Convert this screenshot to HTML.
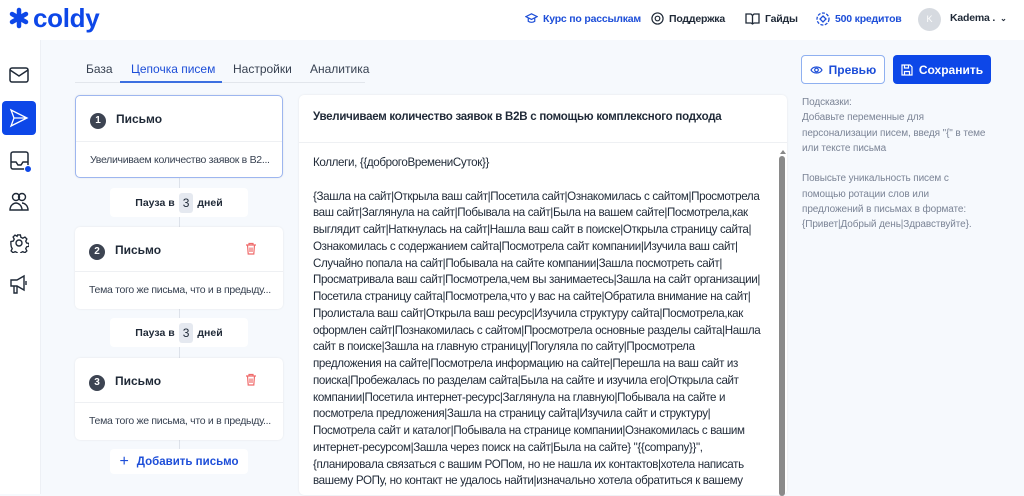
<!DOCTYPE html>
<html><head><meta charset="utf-8"><style>
*{box-sizing:border-box;margin:0;padding:0}
body{width:1024px;height:494px;overflow:hidden;background:#f6f9fd;font-family:"Liberation Sans","Noto Sans CJK SC",sans-serif;color:#1f2937;position:relative}
.abs{position:absolute}
.hdr{left:0;top:0;width:1024px;height:40px;background:#fff}
.side{left:0;top:40px;width:41px;height:454px;background:#fff;border-right:1px solid #edf0f5}
.nav{font-size:10.5px;font-weight:bold;display:flex;align-items:center;gap:5px;top:12px;letter-spacing:-0.2px}
.tab{font-size:12px;top:62px;color:#374151}
.card{background:#fff;border-radius:5px;box-shadow:0 0 2px rgba(0,0,0,.08)}
.num{width:16px;height:16px;border-radius:50%;background:#3d4452;color:#fff;font-size:10px;font-weight:bold;text-align:center;line-height:16px;display:inline-block}
.ct{font-size:12px;font-weight:bold;color:#1f2937}
.cs{font-size:10.5px;color:#374151;letter-spacing:-0.3px}
.pause{background:#fff;border-radius:4px;font-size:10.5px;font-weight:bold;display:flex;align-items:center;justify-content:center;gap:4px;width:138px;height:29px;left:110px}
.pause span{background:#e5e9f0;border-radius:3px;padding:3px 4px;font-size:12px;font-weight:normal}
.vl{width:1px;background:#dde2ea;left:179px}
.body{left:313px;top:155px;font-size:11.6px;line-height:16.75px;color:#1f2937;white-space:pre;letter-spacing:-0.36px}
.hint{left:802px;top:95px;font-size:10px;line-height:15.3px;color:#7b8496;white-space:pre;letter-spacing:-0.1px}
</style></head><body>
<div class="abs hdr"></div>
<div class="abs" style="left:8px;top:4px;display:flex;align-items:center;gap:3px">
<svg width="22" height="22" viewBox="0 0 22 22"><g stroke="#0d47e8" stroke-width="4.5" stroke-linecap="round"><line x1="11" y1="3" x2="11" y2="19"/><line x1="4" y1="7" x2="18" y2="15"/><line x1="4" y1="15" x2="18" y2="7"/></g></svg>
<span style="font-size:26px;font-weight:bold;color:#0d47e8;letter-spacing:-0.3px;line-height:28px">coldy</span></div>
<div class="abs nav" style="left:525px;color:#1d4ed8"><svg width="13" height="13" viewBox="0 0 14 14" fill="none" stroke="#1d4ed8" stroke-width="1.3"><path d="M1 5l6-3 6 3-6 3z M3.5 6.5v3.5c2 1.5 5 1.5 7 0V6.5"/></svg>Курс по рассылкам</div>
<div class="abs nav" style="left:651px"><svg width="13" height="13" viewBox="0 0 14 14" fill="none" stroke="#1f2937" stroke-width="1.3"><circle cx="7" cy="7" r="6"/><circle cx="7" cy="7" r="2.5"/></svg>Поддержка</div>
<div class="abs nav" style="left:745px"><svg width="15" height="13" viewBox="0 0 15 13" fill="none" stroke="#1f2937" stroke-width="1.3"><path d="M1 2h5l1.5 1.5L9 2h5v9H9l-1.5 1-1.5-1H1z M7.5 3.5v8"/></svg>Гайды</div>
<div class="abs nav" style="left:816px;color:#1d4ed8"><svg width="14" height="14" viewBox="0 0 14 14" fill="none" stroke="#1d4ed8" stroke-width="1.3"><circle cx="7" cy="7" r="6" stroke-dasharray="3 1.5"/><path d="M7 4l3 3-3 3-3-3z"/></svg>500 кредитов</div>
<div class="abs" style="left:918px;top:8px;width:23px;height:23px;border-radius:50%;background:#d6dae0;color:#fff;font-size:9px;text-align:center;line-height:23px">K</div>
<div class="abs nav" style="left:950px">Kadema . <span style="font-size:8px">⌄</span></div>

<div class="abs side"></div>
<svg class="abs" style="left:9px;top:67px" width="20" height="16" viewBox="0 0 20 16" fill="none" stroke="#1f2937" stroke-width="1.5"><rect x="1" y="1" width="18" height="14" rx="2"/><path d="M1 3l9 6 9-6"/></svg>
<div class="abs" style="left:2px;top:101px;width:34px;height:34px;background:#0d47e8;border-radius:4px"></div>
<svg class="abs" style="left:9px;top:108px" width="20" height="20" viewBox="0 0 20 20" fill="none" stroke="#fff" stroke-width="1.3"><path d="M2 2l16 8-16 8 3-8z M5 10h13"/></svg>
<svg class="abs" style="left:9px;top:150px" width="24" height="24" viewBox="0 0 24 24" fill="none" stroke="#1f2937" stroke-width="1.5"><rect x="2" y="2" width="17" height="17" rx="2"/><path d="M2 12h5l2 3h3l2-3h5"/><circle cx="19" cy="19" r="3.5" fill="#0d47e8" stroke="#fff" stroke-width="1"/></svg>
<svg class="abs" style="left:9px;top:192px" width="20" height="20" viewBox="0 0 20 20" fill="none" stroke="#1f2937" stroke-width="1.4"><circle cx="7" cy="5" r="3.5"/><circle cx="13" cy="5" r="3.5"/><path d="M1 18c0-5 4-7 6-7s6 2 6 7z M13 11c2 0 6 2 6 7h-6"/></svg>
<svg class="abs" style="left:9px;top:233px" width="20" height="20" viewBox="0 0 20 20" fill="none" stroke="#1f2937" stroke-width="1.4"><circle cx="10" cy="10" r="3"/><path d="M8.5 1.5h3l.5 2.5 2 1 2.3-1.2 2 2-1.2 2.3 1 2 2.4.4v3l-2.4.5-1 2 1.2 2.3-2 2-2.3-1.2-2 1-.5 2.4h-3l-.5-2.4-2-1-2.3 1.2-2-2 1.2-2.3-1-2L1.5 11.5v-3L4 8l1-2-1.2-2.3 2-2L8 3z" transform="scale(.95) translate(.5 .5)"/></svg>
<svg class="abs" style="left:9px;top:273px" width="20" height="22" viewBox="0 0 20 22" fill="none" stroke="#1f2937" stroke-width="1.4"><path d="M2 7h6l7-4v14l-7-4H2z M5 13v7h3v-7 M17 8v4"/></svg>

<div class="abs tab" style="left:86px">База</div>
<div class="abs tab" style="left:131px;color:#1d4ed8">Цепочка писем</div>
<div class="abs tab" style="left:233px">Настройки</div>
<div class="abs tab" style="left:310px">Аналитика</div>
<div class="abs" style="left:75px;top:82px;width:290px;height:1px;background:#e2e6ec"></div>
<div class="abs" style="left:120px;top:81px;width:102px;height:2px;background:#3b6fe0"></div>

<div class="abs vl" style="top:178px;height:290px"></div>
<div class="abs card" style="left:75px;top:95px;width:208px;height:83px;border:1px solid #9db6ef"><div class="abs" style="left:14px;top:14px"><span class="num">1</span></div><div class="abs ct" style="left:40px;top:16px">Письмо</div><div class="abs" style="left:0;top:45px;width:206px;height:1px;background:#eef0f3"></div><div class="abs cs" style="left:14px;top:58px">Увеличиваем количество заявок в B2...</div></div>
<div class="abs pause" style="top:188px">Пауза в <span>3</span> дней</div>
<div class="abs card" style="left:75px;top:227px;width:208px;height:82px"><div class="abs" style="left:14px;top:14px"><span class="num">2</span></div><div class="abs ct" style="left:40px;top:16px">Письмо</div><svg class="abs" style="left:170px;top:15px" width="12" height="13" viewBox="0 0 12 13" fill="none" stroke="#ef6b6b" stroke-width="1.2"><path d="M1 3h10 M4 3V1.5h4V3 M2.5 3l.7 9h5.6l.7-9 M5 5.5v4.5 M7 5.5v4.5"/></svg><div class="abs" style="left:0;top:44px;width:208px;height:1px;background:#eef0f3"></div><div class="abs cs" style="left:14px;top:57px">Тема того же письма, что и в предыду...</div></div>
<div class="abs pause" style="top:318px">Пауза в <span>3</span> дней</div>
<div class="abs card" style="left:75px;top:358px;width:208px;height:82px"><div class="abs" style="left:14px;top:14px"><span class="num">3</span></div><div class="abs ct" style="left:40px;top:16px">Письмо</div><svg class="abs" style="left:170px;top:15px" width="12" height="13" viewBox="0 0 12 13" fill="none" stroke="#ef6b6b" stroke-width="1.2"><path d="M1 3h10 M4 3V1.5h4V3 M2.5 3l.7 9h5.6l.7-9 M5 5.5v4.5 M7 5.5v4.5"/></svg><div class="abs" style="left:0;top:44px;width:208px;height:1px;background:#eef0f3"></div><div class="abs cs" style="left:14px;top:57px">Тема того же письма, что и в предыду...</div></div>
<div class="abs pause" style="top:449px;height:25px;color:#1d4ed8;font-size:11.5px"><span style="background:none;font-size:16px;padding:0 4px 0 0;font-weight:normal">+</span>Добавить письмо</div>

<div class="abs card" style="left:299px;top:95px;width:488px;height:400px"></div>
<div class="abs" style="left:313px;top:111px;font-size:11.5px;font-weight:bold;letter-spacing:-0.25px">Увеличиваем количество заявок в B2B с помощью комплексного подхода</div>
<div class="abs" style="left:299px;top:142px;width:488px;height:1px;background:#eef0f3"></div>
<div class="abs" style="left:780px;top:150px;width:0;height:0;border:3px solid transparent;border-bottom:4px solid #888;border-top:0"></div>
<div class="abs" style="left:779px;top:156px;width:6px;height:340px;background:#8a8a8a;border-radius:3px"></div>
<div class="abs body">Коллеги, {{доброгоВремениСуток}}

{Зашла на сайт|Открыла ваш сайт|Посетила сайт|Ознакомилась с сайтом|Просмотрела
ваш сайт|Заглянула на сайт|Побывала на сайт|Была на вашем сайте|Посмотрела,как
выглядит сайт|Наткнулась на сайт|Нашла ваш сайт в поиске|Открыла страницу сайта|
Ознакомилась с содержанием сайта|Посмотрела сайт компании|Изучила ваш сайт|
Случайно попала на сайт|Побывала на сайте компании|Зашла посмотреть сайт|
Просматривала ваш сайт|Посмотрела,чем вы занимаетесь|Зашла на сайт организации|
Посетила страницу сайта|Посмотрела,что у вас на сайте|Обратила внимание на сайт|
Пролистала ваш сайт|Открыла ваш ресурс|Изучила структуру сайта|Посмотрела,как
оформлен сайт|Познакомилась с сайтом|Просмотрела основные разделы сайта|Нашла
сайт в поиске|Зашла на главную страницу|Погуляла по сайту|Просмотрела
предложения на сайте|Посмотрела информацию на сайте|Перешла на ваш сайт из
поиска|Пробежалась по разделам сайта|Была на сайте и изучила его|Открыла сайт
компании|Посетила интернет-ресурс|Заглянула на главную|Побывала на сайте и
посмотрела предложения|Зашла на страницу сайта|Изучила сайт и структуру|
Посмотрела сайт и каталог|Побывала на странице компании|Ознакомилась с вашим
интернет-ресурсом|Зашла через поиск на сайт|Была на сайте} "{{company}}",
{планировала связаться с вашим РОПом, но не нашла их контактов|хотела написать
вашему РОПу, но контакт не удалось найти|изначально хотела обратиться к вашему</div>

<div class="abs" style="left:801px;top:55px;width:84px;height:29px;border:1px solid #8fb0f0;border-radius:4px;background:#fff;color:#1d4ed8;font-size:12px;font-weight:bold;display:flex;align-items:center;justify-content:center;gap:6px"><svg width="13" height="10" viewBox="0 0 13 10" fill="none" stroke="#1d4ed8" stroke-width="1.2"><path d="M1 5c2-4 9-4 11 0-2 4-9 4-11 0z"/><circle cx="6.5" cy="5" r="1.8"/></svg>Превью</div>
<div class="abs" style="left:893px;top:55px;width:98px;height:29px;border-radius:4px;background:#0d47e8;color:#fff;font-size:12px;font-weight:bold;display:flex;align-items:center;justify-content:center;gap:6px"><svg width="12" height="12" viewBox="0 0 12 12" fill="none" stroke="#fff" stroke-width="1.2"><path d="M1 1h8l2 2v8H1z M3.5 1v3h4V1 M3.5 11V7.5h5V11"/></svg>Сохранить</div>
<div class="abs hint">Подсказки:
Добавьте переменные для
персонализации писем, введя "{" в теме
или тексте письма

Повысьте уникальность писем с
помощью ротации слов или
предложений в письмах в формате:
{Привет|Добрый день|Здравствуйте}.</div>
</body></html>
